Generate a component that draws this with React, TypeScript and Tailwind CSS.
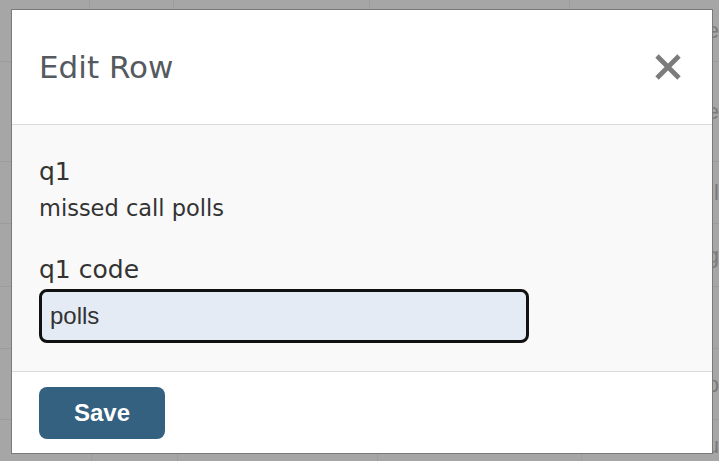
export default function App() {
  const rows = [62, 100, 62, 63, 62, 71, 52, 60]
  return (
    <div className="relative w-[719px] h-[461px] overflow-hidden bg-[#a6a6a6] font-['DejaVu_Sans',sans-serif]">
      {/* Table behind the overlay */}
      <div className="flex flex-col">
        {rows.map((h, i) => (
          <div key={i} style={{ height: h }} className="flex border-b border-[#9c9c9c]">
            <div className="w-[93px] border-r border-[#9c9c9c]" />
            <div className="w-[87px] border-r border-[#9c9c9c]" />
            <div className="w-[203px] border-r border-[#9c9c9c]" />
            <div className="w-[206px] border-r border-[#9c9c9c]" />
            <div className="flex-1 flex items-center pl-[125px] text-[22px] text-[#7a7a7a] font-['Liberation_Sans',sans-serif]">
              {["ee", "e", "l", "g", "", "p", "u", ""][i]}
            </div>
          </div>
        ))}
      </div>

      {/* Modal */}
      <div className="absolute left-[11px] top-[9px] w-[702px] h-[445px] flex flex-col border border-[#7a7a7a] bg-white">
        <div className="h-[115px] shrink-0 flex items-center justify-between pl-[27px] pr-[31px] border-b border-[#dadada]">
          <h2 className="text-[31px] text-[#555a5f]">Edit Row</h2>
          <svg width="26" height="26" viewBox="0 0 26 26">
            <path d="M2 2 L24 24 M24 2 L2 24" stroke="#7c7c7c" strokeWidth="4.8" />
          </svg>
        </div>
        <div className="flex-1 bg-[#f9f9f9] pl-[27px] pt-[32px] border-b border-[#dadada]">
          <div className="text-[25px] leading-[30px] text-[#333]">q1</div>
          <div className="mt-[6px] text-[22.5px] leading-[30px] text-[#333]">missed call polls</div>
          <div className="mt-[32px] text-[25px] leading-[30px] text-[#333]">q1 code</div>
          <div className="mt-[4px] w-[490px] h-[54px] rounded-[8px] border-[3px] border-[#111] bg-[#e5ebf5] flex items-center pl-[8px] text-[24px] text-[#333] font-['Liberation_Sans',sans-serif]">
            polls
          </div>
        </div>
        <div className="h-[81px] shrink-0 flex items-center pl-[27px]">
          <button className="w-[126px] h-[52px] rounded-[8px] bg-[#33617f] text-white text-[24px] font-bold font-['Liberation_Sans',sans-serif]">
            Save
          </button>
        </div>
      </div>
    </div>
  )
}
